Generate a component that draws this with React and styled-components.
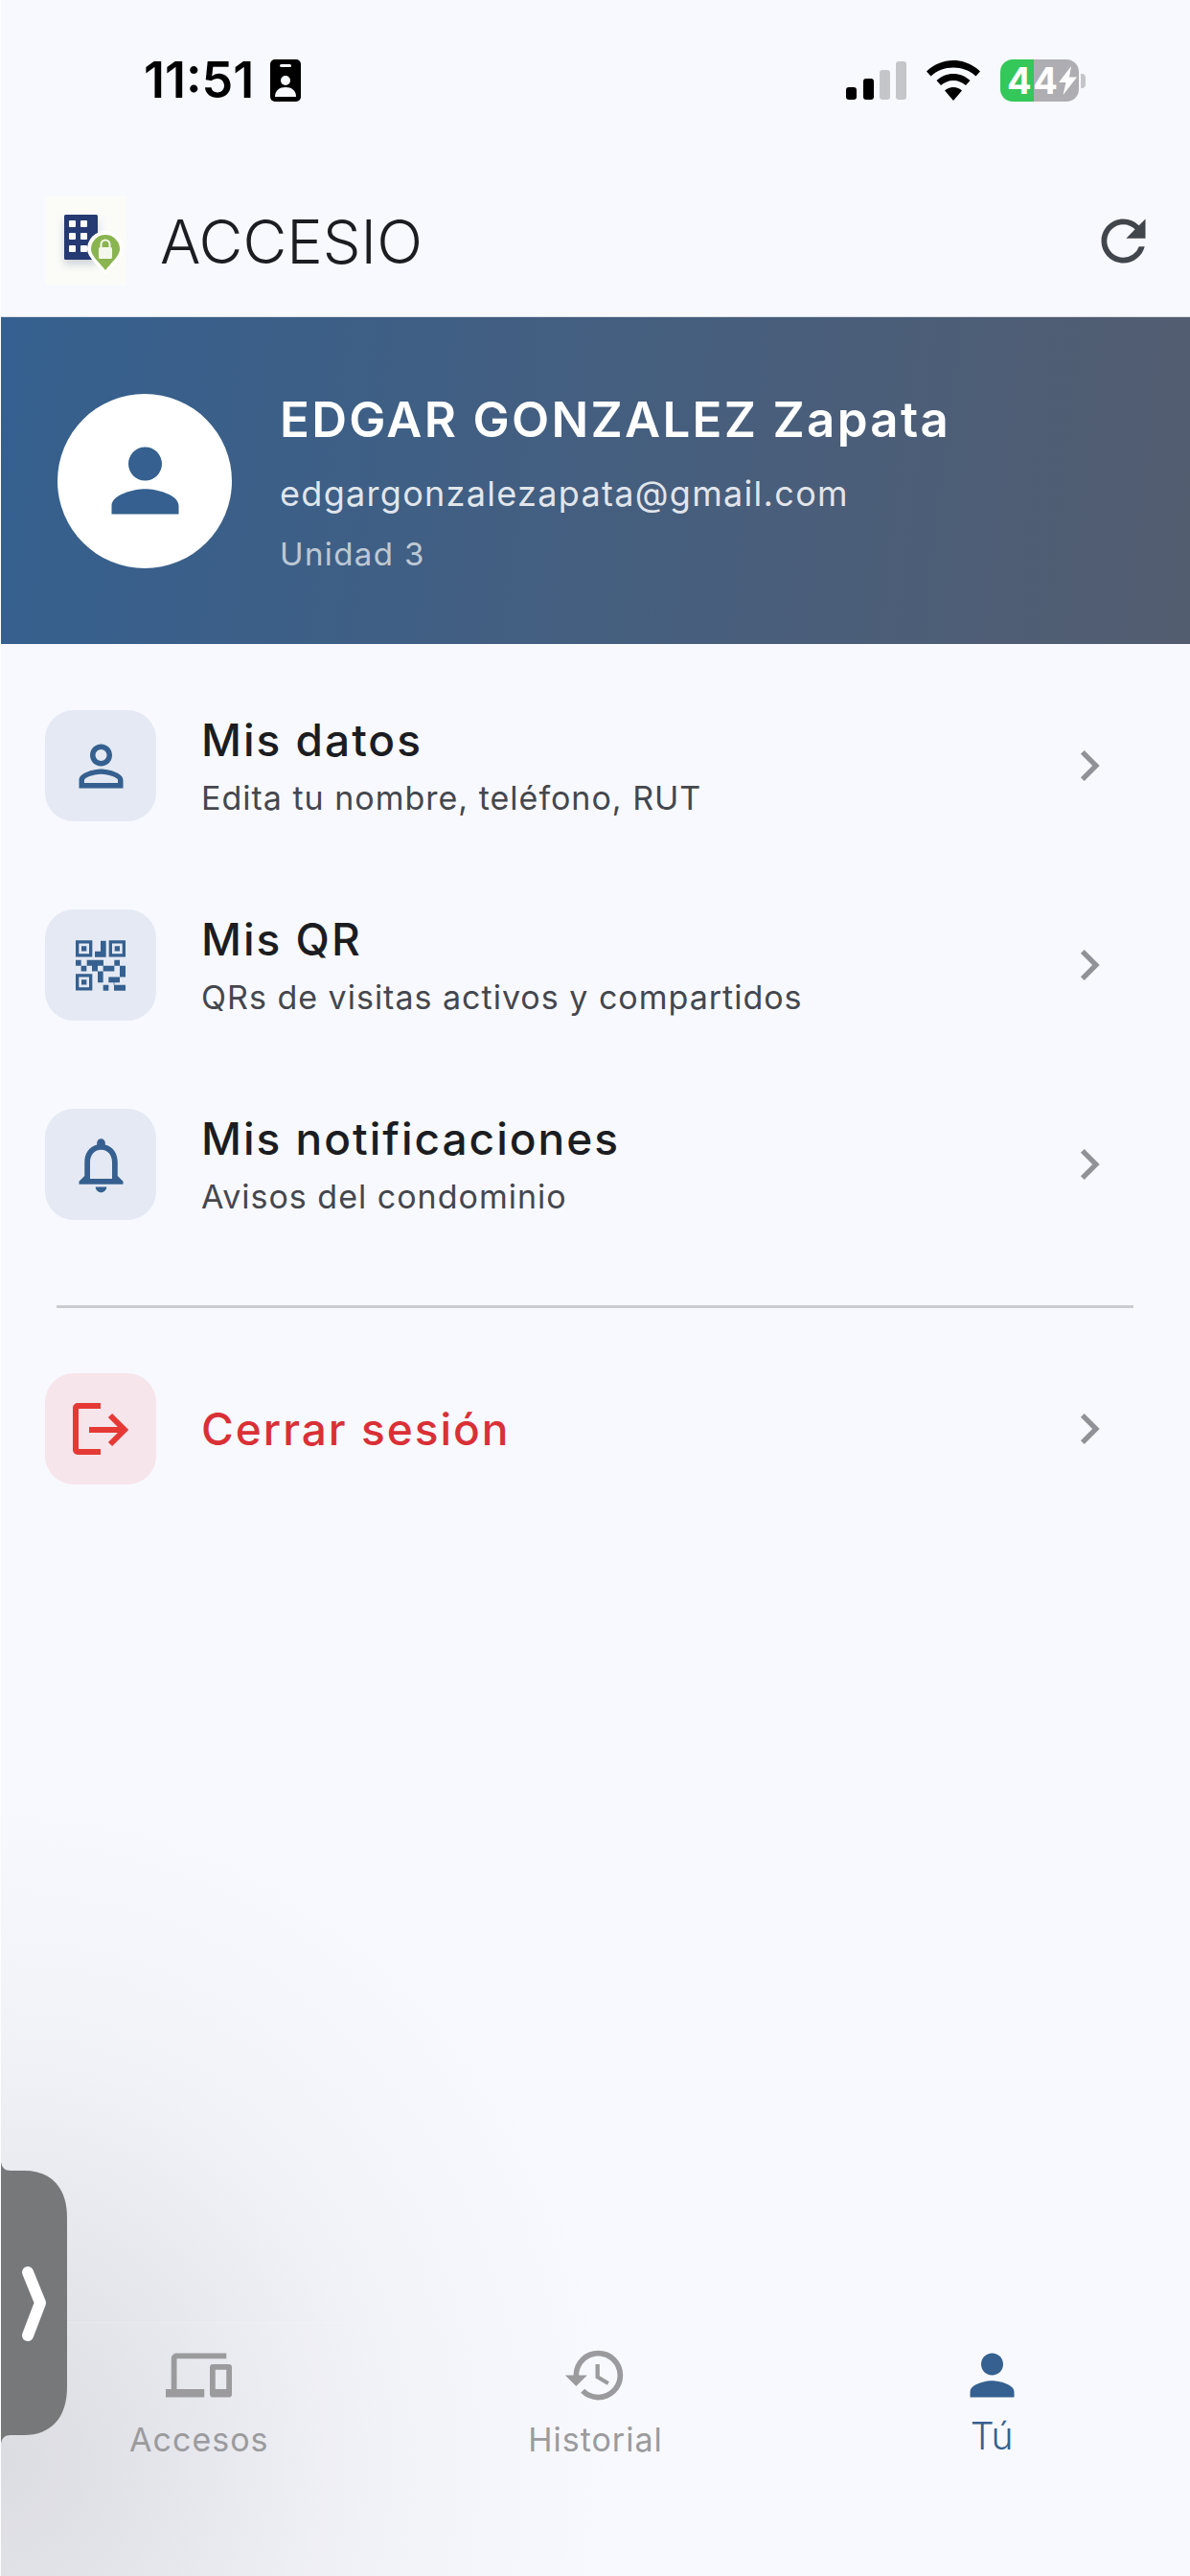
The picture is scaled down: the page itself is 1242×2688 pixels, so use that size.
import React from 'react'
import styled, { createGlobalStyle } from 'styled-components'
import {
  MdRefresh,
  MdPerson,
  MdPersonOutline,
  MdNotificationsNone,
  MdChevronRight,
  MdDevices,
  MdHistory,
} from 'react-icons/md'

const BLUE = '#35608f'
const GREY = '#9b9b9d'

const GlobalStyle = createGlobalStyle`
  html, body {
    margin: 0;
    padding: 0;
    background: #f8f9ff;
  }
  * {
    box-sizing: border-box;
  }
`

const Page = styled.div`
  position: relative;
  display: flex;
  flex-direction: column;
  width: 1242px;
  height: 2688px;
  overflow: hidden;
  border-left: 1px solid #fdfdff;
  background: #f8f9ff;
  font-family: Inter, "Liberation Sans", sans-serif;
`

// Soft shadow the floating handle throws over the page
const HandleGlow = styled.div`
  position: absolute;
  inset: 0;
  pointer-events: none;
  background: radial-gradient(
    ellipse 640px 700px at 0 2570px,
    rgba(95, 95, 100, 0.2) 0%,
    rgba(95, 95, 100, 0.125) 30%,
    rgba(95, 95, 100, 0.045) 62%,
    rgba(95, 95, 100, 0) 100%
  );
`

// ----------
// Status bar

const StatusBar = styled.div`
  position: relative;
  display: flex;
  justify-content: space-between;
  height: 160px;
  padding: 61px 109px 0 149px;
`

const StatusLeft = styled.div`
  display: flex;
  align-items: center;
  height: 46px;
  gap: 17px;
`

const Time = styled.span`
  font-size: 52px;
  line-height: 46px;
  font-weight: 600;
  color: #000;
`

const StatusRight = styled.div`
  display: flex;
  align-items: center;
  height: 46px;
  gap: 21px;
`

const BatteryWrap = styled.div`
  display: flex;
  align-items: center;
  gap: 2px;
`

const BatteryBody = styled.div`
  display: flex;
  align-items: center;
  width: 82px;
  height: 44px;
  padding-left: 7px;
  border-radius: 13px;
  background: linear-gradient(90deg, #34c759 43%, #aeaeb2 43%);
  color: #fff;
  font-size: 38px;
  line-height: 44px;
  font-weight: 700;
  letter-spacing: 1.5px;
`

const BatteryNub = styled.div`
  width: 5px;
  height: 15px;
  border-radius: 0 4px 4px 0;
  background: #c5c5c9;
`

const BadgeIcon = () => (
  <svg width="32" height="44" viewBox="0 0 32 44">
    <rect width="32" height="44" rx="5" fill="#000" />
    <rect x="10" y="5" width="12" height="3" rx="1.5" fill="#f8f9ff" />
    <circle cx="16" cy="22" r="5" fill="#f8f9ff" />
    <path d="M5 39c0-7 5-10 11-10s11 3 11 10z" fill="#f8f9ff" />
  </svg>
)

const SignalIcon = () => (
  <svg width="63" height="40" viewBox="0 0 63 40">
    <rect x="0" y="27" width="11" height="13" rx="3" fill="#000" />
    <rect x="18" y="18" width="11" height="22" rx="3" fill="#000" />
    <rect x="35" y="9" width="11" height="31" rx="3" fill="#c5c6ca" />
    <rect x="52" y="0" width="11" height="40" rx="3" fill="#c5c6ca" />
  </svg>
)

const WifiIcon = () => (
  <svg width="56" height="42" viewBox="0 0 56 42">
    <path d="M28 0c10.500 0 20 4 28 11.500l-4.500 5C45 10.500 37 7.500 28 7.500S11 10.500 4.500 16.500L0 11.500C8 4 17.500 0 28 0z" />
    <path d="M28 14c6.500 0 12.500 2.500 17.500 7L41 26c-3.500-3-8-5-13-5s-9.500 2-13 5l-4.500-5c5-4.500 11-7 17.500-7z" />
    <path d="M28 28c3.500 0 6.500 1.200 9 3.500L28 42l-9-10.500c2.500-2.300 5.500-3.500 9-3.500z" />
  </svg>
)

const BoltIcon = () => (
  <svg width="19" height="30" viewBox="0 0 19 30">
    <path d="M13 0L0 17h7.500L4.500 30 19 11.500h-8z" fill="#fff" />
  </svg>
)

// ------
// Header

const Header = styled.div`
  position: relative;
  display: flex;
  align-items: center;
  height: 171px;
  padding: 11px 35px 0 46px;
`

const Brand = styled.div`
  flex: 1;
  margin: 2px 0 0 35px;
  font-size: 63px;
  line-height: 70px;
  font-weight: 350;
  color: #1b1d21;
`

const RefreshIcon = styled(MdRefresh)`
  color: #41464c;
`

const LogoIcon = () => (
  <svg width="85" height="92" viewBox="0 0 85 92">
    <defs>
      <filter id="logoShadow" x="-30%" y="-30%" width="160%" height="160%">
        <feGaussianBlur stdDeviation="4" />
      </filter>
    </defs>
    <rect width="85" height="92" fill="#fbfcf8" />
    <rect x="20" y="24" width="35" height="47" rx="1" fill="#8a93aa" opacity="0.4" filter="url(#logoShadow)" />
    <rect x="20" y="19" width="35" height="47" rx="1.500" fill="#253a72" />
    {[0, 1, 2].map((r) =>
      [0, 1].map((c) => (
        <rect key={`${r}-${c}`} x={25 + c * 12} y={25 + r * 13} width="7" height="7" rx="1" fill="#fff" />
      ))
    )}
    <path d="M63 82C56 72 44 64 44 55a19 19 0 0 1 38 0c0 9-12 17-19 27z" fill="#fff" />
    <path d="M63 77C57 69 48 62 48 55a15 15 0 0 1 30 0c0 7-9 14-15 22z" fill="#8ab44f" />
    <rect x="56" y="53" width="14" height="12" rx="1.500" fill="#f4f8ec" />
    <path d="M58.500 53v-3a4.500 4.500 0 0 1 9 0v3" fill="none" stroke="#f4f8ec" strokeWidth="2" />
  </svg>
)

// ----
// Hero

const Hero = styled.div`
  position: relative;
  display: flex;
  align-items: center;
  gap: 50px;
  height: 341px;
  padding-left: 59px;
  background: linear-gradient(97deg, #35608f 0%, #535d70 100%);
  box-shadow: 0 -1px 0 #d9dde3;
`

const Avatar = styled.div`
  display: flex;
  align-items: center;
  justify-content: center;
  flex: none;
  width: 182px;
  height: 182px;
  border-radius: 50%;
  background: #fff;
  color: ${BLUE};
`

const HeroText = styled.div`
  display: flex;
  flex-direction: column;
  padding-top: 5px;
`

const Name = styled.div`
  font-size: 51px;
  line-height: 56px;
  font-weight: 600;
  letter-spacing: 2.3px;
  color: #fff;
`

const Email = styled.div`
  margin-top: 27px;
  font-size: 36px;
  line-height: 44px;
  letter-spacing: 1.3px;
  color: rgba(255, 255, 255, 0.86);
`

const Unit = styled.div`
  margin-top: 21px;
  font-size: 33px;
  line-height: 40px;
  letter-spacing: 1.4px;
  color: rgba(255, 255, 255, 0.68);
`

// ---------
// Menu list

const List = styled.div`
  position: relative;
  display: flex;
  flex-direction: column;
  gap: 92px;
  margin: ${(p) => (p.$flush ? '0' : '69px')} 73px 0 46px;
`

const Row = styled.div`
  display: flex;
  align-items: center;
  gap: 47px;
  height: 116px;
`

const IconBox = styled.div`
  display: flex;
  align-items: center;
  justify-content: center;
  flex: none;
  width: 116px;
  height: 116px;
  border-radius: 30px;
  background: ${(p) => (p.$danger ? '#f6e5ea' : '#e4e9f3')};
  color: ${(p) => (p.$danger ? '#e53935' : BLUE)};
`

const RowText = styled.div`
  display: flex;
  flex: 1;
  flex-direction: column;
  gap: 11px;
`

const RowTitle = styled.div`
  font-size: 46px;
  line-height: 56px;
  font-weight: 550;
  letter-spacing: 2px;
  color: ${(p) => (p.$danger ? '#d93036' : '#1b1d21')};
`

const RowSub = styled.div`
  font-size: 34px;
  line-height: 44px;
  letter-spacing: 1px;
  color: #44474d;
`

const Chevron = styled(MdChevronRight)`
  flex: none;
  color: #909296;
`

const Divider = styled.div`
  position: relative;
  height: 3px;
  margin: 89px 59px 68px 58px;
  background: #c9cbd2;
`

const QrIcon = () => (
  <svg width="52" height="53" viewBox="57 60 156 158" fill="currentColor">
    <path fillRule="evenodd" d="M57 60h52v52H57zM67 70v32h32V70zM75 78h16v16H75z" />
    <path fillRule="evenodd" d="M161 60h52v52h-52zM171 70v32h32V70zM179 78h16v16h-16z" />
    <path fillRule="evenodd" d="M57 165h52v52H57zM67 175v32h32v-32zM75 183h16v16H75z" />
    <path d="M135 62h17v16h-17zM135 78h17v35h-35V95h18z" />
    <path d="M57 122h17v18H57zM74 140h17v17H74zM92 122h52v18h-18v17h-18v-17H92zM178 122h17v18h-17zM143 140h35v17h-35zM195 140h18v35h-18z" />
    <path d="M126 157h17v35h-17zM160 175h35v17h-17v8h17v18h-18v-18h-1v-8h-16zM143 200h17v18h-17zM195 200h18v18h-18z" />
  </svg>
)

const LogoutIcon = () => (
  <svg width="58" height="54" viewBox="0 0 58 54" fill="none" stroke="currentColor" strokeWidth="6">
    <path d="M29 3H5a2 2 0 0 0-2 2v44a2 2 0 0 0 2 2h24" />
    <path d="M17 28h38M39 13l15 15-15 15" />
  </svg>
)

const menuItems = [
  { title: 'Mis datos', sub: 'Edita tu nombre, teléfono, RUT', icon: <MdPersonOutline size={69} /> },
  { title: 'Mis QR', sub: 'QRs de visitas activos y compartidos', icon: <QrIcon /> },
  { title: 'Mis notificaciones', sub: 'Avisos del condominio', icon: <MdNotificationsNone size={69} /> },
]

// ----------
// Bottom nav

const Nav = styled.div`
  position: relative;
  display: grid;
  grid-template-columns: repeat(3, 1fr);
  height: 265px;
  margin-top: auto;
  padding-top: 20px;
  border-top: 1px solid rgba(248, 249, 255, 0.2);
  background: rgba(248, 249, 255, 0.06);
`

const NavItem = styled.div`
  display: flex;
  flex-direction: column;
  align-items: center;
  color: ${(p) => (p.$active ? BLUE : GREY)};
`

const NavLabel = styled.div`
  margin-top: ${(p) => (p.$active ? '9px' : '13px')};
  font-size: ${(p) => (p.$active ? '39px' : '34px')};
  line-height: 40px;
  font-weight: ${(p) => (p.$active ? 300 : 400)};
  letter-spacing: ${(p) => (p.$active ? '0' : '1px')};
`

const navItems = [
  { label: 'Accesos', Icon: MdDevices },
  { label: 'Historial', Icon: MdHistory },
  { label: 'Tú', Icon: MdPerson, active: true },
]

// ------
// Handle

const Handle = styled.svg`
  position: absolute;
  left: 0;
  top: 2256px;
`

const SideHandle = () => (
  <Handle width="69" height="294" viewBox="0 0 69 294">
    <path
      d="M0 0C1 6 4 9 10 9H24C52 9 69 26 69 58V235C69 267 52 285 24 285H10C4 285 1 288 0 294Z"
      fill="#77787a"
    />
    <path
      d="M28 115L41 147L28 181"
      fill="none"
      stroke="#fff"
      strokeWidth="12"
      strokeLinecap="round"
      strokeLinejoin="round"
    />
  </Handle>
)

export default function App() {
  return (
    <Page>
      <GlobalStyle />
      <HandleGlow />

      <StatusBar>
        <StatusLeft>
          <Time>11:51</Time>
          <BadgeIcon />
        </StatusLeft>
        <StatusRight>
          <SignalIcon />
          <WifiIcon />
          <BatteryWrap>
            <BatteryBody>
              44
              <BoltIcon />
            </BatteryBody>
            <BatteryNub />
          </BatteryWrap>
        </StatusRight>
      </StatusBar>

      <Header>
        <LogoIcon />
        <Brand>ACCESIO</Brand>
        <RefreshIcon size={69} />
      </Header>

      <Hero>
        <Avatar>
          <MdPerson size={105} />
        </Avatar>
        <HeroText>
          <Name>EDGAR GONZALEZ Zapata</Name>
          <Email>edgargonzalezapata@gmail.com</Email>
          <Unit>Unidad 3</Unit>
        </HeroText>
      </Hero>

      <List>
        {menuItems.map((item) => (
          <Row key={item.title}>
            <IconBox>{item.icon}</IconBox>
            <RowText>
              <RowTitle>{item.title}</RowTitle>
              <RowSub>{item.sub}</RowSub>
            </RowText>
            <Chevron size={64} />
          </Row>
        ))}
      </List>

      <Divider />

      <List $flush>
        <Row>
          <IconBox $danger>
            <LogoutIcon />
          </IconBox>
          <RowText>
            <RowTitle $danger>Cerrar sesión</RowTitle>
          </RowText>
          <Chevron size={64} />
        </Row>
      </List>

      <Nav>
        {navItems.map(({ label, Icon, active }) => (
          <NavItem key={label} $active={active}>
            <Icon size={69} />
            <NavLabel $active={active}>{label}</NavLabel>
          </NavItem>
        ))}
      </Nav>

      <SideHandle />
    </Page>
  )
}
